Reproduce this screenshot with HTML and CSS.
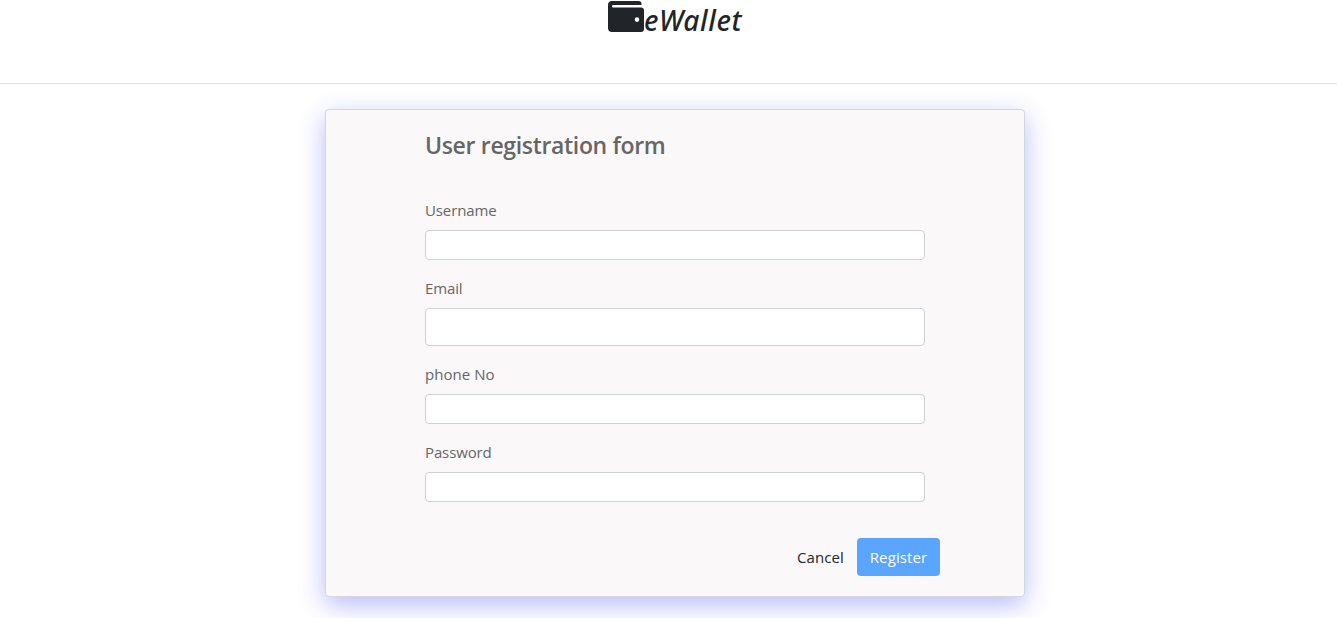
FILE: index.html
```html
<!DOCTYPE html>
<html lang="en">
<head>
<meta charset="utf-8">
<title>eWallet</title>
<link rel="stylesheet" href="styles.css">
</head>
<body>
<header class="header">
  <svg class="logo" viewBox="0 0 36 31" aria-hidden="true"><path fill="#212529" fill-rule="evenodd" d="M4 0H30.500Q33.500 0 33.500 3V4H5.200Q4 4 4 5.200T5.200 6.400H33Q36 6.400 36 9.400V28Q36 31 33 31H4Q0 31 0 27V4Q0 0 4 0ZM29 16.300a2.300 2.300 0 1 0 0 4.600a2.300 2.300 0 0 0 0-4.600Z"/></svg>
  <span class="brand">eWallet</span>
</header>
<main class="card">
  <form class="form">
    <h1 class="title">User registration form</h1>
    <label class="label" for="username">Username</label>
    <input class="input" id="username" type="text">
    <label class="label" for="email">Email</label>
    <input class="input input-tall" id="email" type="email">
    <label class="label label-phone" for="phone">phone No</label>
    <input class="input" id="phone" type="text">
    <label class="label" for="password">Password</label>
    <input class="input" id="password" type="password">
    <div class="actions">
      <a class="cancel">Cancel</a>
      <button class="register" type="button">Register</button>
    </div>
  </form>
</main>
</body>
</html>
```
FILE: styles.css
```css
* { box-sizing: border-box; }
body { margin: 0; height: 618px; overflow: hidden; background: #fff; color: #212529; font-family: "Open Sans", "Noto Sans", sans-serif; font-size: 15px; }
.header { height: 84px; padding: 1px 0 0 608px; display: flex; align-items: flex-start; border-bottom: 1px solid #dee2e6; }
.logo { width: 36px; height: 31px; flex: none; }
.brand { font-family: "Noto Sans", sans-serif; font-size: 28px; font-weight: 500; font-style: italic; line-height: 38px; letter-spacing: 0.6px; }
.card { width: 700px; height: 488px; margin: 25px 0 0 325px; padding: 21px 99px 20px; background: #faf8f9; border: 1px solid #d5d5dc; border-radius: 4px; box-shadow: 0 8px 26px rgba(20, 30, 255, .3); }
.form { display: flex; flex-direction: column; }
.title { margin: 0 0 38px; font-size: 23px; line-height: 29px; font-weight: 600; color: #666; letter-spacing: -0.33px; white-space: nowrap; }
.label { height: 24px; line-height: 24px; margin: 0 0 8px; color: #666; letter-spacing: -0.12px; }
.label-phone { letter-spacing: 0.05px; }
.input { width: 500px; height: 30px; margin: 0 0 16px; padding: 4px 8px; background: #fff; border: 1px solid #ced0d4; border-radius: 4px; }
.input-tall { height: 38px; }
.actions { display: flex; justify-content: flex-end; align-items: center; gap: 13px; margin: 20px -15px 0 0; }
.cancel { color: #212529; line-height: 24px; letter-spacing: 0.1px; }
.register { width: 83px; height: 38px; padding: 0; border: 0; border-radius: 4px; background: #5aa5ff; color: #fff; font: inherit; line-height: 24px; letter-spacing: 0.1px; }
```
